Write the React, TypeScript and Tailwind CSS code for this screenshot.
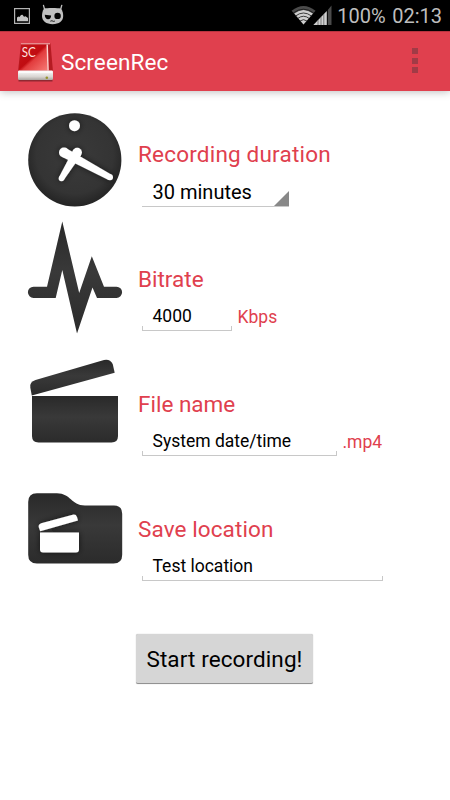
import type { ReactNode } from 'react';

function StatusBar() {
  return (
    <header className="flex h-[31px] items-start justify-between bg-black pr-[8px] pl-[14px] text-[#bebebe]">
      <div className="flex h-[31px]">
        <svg width="56" height="31" viewBox="14 0 56 31" aria-hidden="true">
          <rect x="14.6" y="8.6" width="14.8" height="14.8" fill="none" stroke="#b3b3b3" strokeWidth="1.2" />
          <path d="M17 21.300v-3.800l1.500-1 1 .4 1.500-1.900 1.500-.2 1.500 2 1.500-.6 2.500 1.800v3.300z" fill="#c4c4c4" />
          <path d="M44.600 9.500 43.500 5.300M60.600 9.500l1.200-4.200" stroke="#bcbcbc" strokeWidth="1.300" strokeLinecap="round" />
          <path d="M42 16c0-3 .6-5.500 2-7.300 2.500-.8 14-.8 17 0 1.500 2 2.200 4.300 2.200 7.300 0 5-4.200 8.200-10.600 8.200S42 21 42 16z" fill="#c1c1c1" />
          <path d="M44.800 14.700l6.300.8c0 2.400-1.100 3.700-3 3.700s-3.300-1.600-3.300-4.500z" fill="#050505" />
          <circle cx="57.600" cy="15.900" r="3.200" fill="#050505" />
          <path d="M50.300 21.200l1.700-.5 1.200.7 1.700-.3" stroke="#222" strokeWidth="1" fill="none" />
        </svg>
      </div>
      <div className="flex h-[31px] items-start">
        <svg width="42" height="31" viewBox="291 0 42 31" aria-hidden="true">
          <path d="M291.600 10.800Q303.500 1.200 315.500 10.800L303.500 24.500z" fill="#4b4b4b" />
          <path d="M294.300 13.600Q303.500 6.600 312.900 13.600L303.500 24.500z" fill="#cfcfcf" />
          <g fill="none" stroke="#141414" strokeWidth=".8">
            <path d="M293.400 12.900Q303.500 5.500 313.600 12.900" />
            <path d="M295.500 16Q303.500 10 311.500 16" />
            <path d="M297.700 18.500Q303.500 14 309.300 18.500" />
            <path d="M300 21Q303.500 18.300 307 21" />
          </g>
          <path d="M313.300 25L326.800 11V25z" fill="#cfcfcf" />
          <path d="M327.800 10L331.500 5.500V25H327.800z" fill="#4b4b4b" />
          <path d="M318 20v5M321 17v8M323.800 14v11" stroke="#555" strokeWidth=".7" />
        </svg>
        <span className="mt-[4px] ml-[4px] w-[55px] text-[20px] leading-6 tracking-[0px]">100%</span>
        <span className="mt-[4px] text-[20px] leading-6 tracking-[0px]">02:13</span>
      </div>
    </header>
  );
}

function AppIcon() {
  return (
    <svg width="44" height="60" viewBox="14 31 44 60" aria-hidden="true">
      <defs>
        <linearGradient id="drive" x1="0" y1="0" x2="1" y2="1">
          <stop stopColor="#c8161b" />
          <stop offset=".48" stopColor="#c00c11" />
          <stop offset=".56" stopColor="#e23c3d" />
          <stop offset="1" stopColor="#f77b76" />
        </linearGradient>
        <linearGradient id="base" x1="0" y1="0" x2="0" y2="1">
          <stop stopColor="#fff" />
          <stop offset=".65" stopColor="#d8d5d1" />
          <stop offset="1" stopColor="#aaa5a0" />
        </linearGradient>
      </defs>
      <path d="M18.500 79.500h34" stroke="#8f2932" strokeWidth="2" />
      <path d="M21 42.500h29.500l2.500 28H18z" fill="#b51b22" />
      <path d="M21.500 43.500h25.300l.9 26H18.900z" fill="url(#drive)" />
      <path d="M47.200 43.500l.9 26" stroke="#ffd5d1" strokeWidth="1.400" />
      <path d="M21 42.800h29" stroke="#f4b6b6" strokeWidth="1" />
      <rect x="18" y="69.500" width="35" height="9.500" rx="1.200" fill="url(#base)" />
      <path d="M19 71.200h33" stroke="#fff" />
      <circle cx="46.800" cy="76.800" r="1.300" fill="#96932a" />
      <text x="21.800" y="55.500" fill="#ffe1df" fontSize="13" textLength="14" lengthAdjust="spacingAndGlyphs" fontFamily="Lato, sans-serif">SC</text>
    </svg>
  );
}

function TitleBar() {
  return (
    <div className="z-10 flex h-[60px] items-center border-t border-[#b83440] bg-[#e0404e] pl-[14px] shadow-[0_1px_8px_rgba(0,0,0,0.26)]">
      <AppIcon />
      <h1 className="ml-[3px] text-[22.500px] leading-[30px] font-normal tracking-[0.1px] text-white">ScreenRec</h1>
      <button aria-label="More options" className="mr-[32px] mb-[2px] ml-auto flex flex-col gap-[3.500px]">
        <i className="size-[6px] bg-[#a13b46]" />
        <i className="size-[6px] bg-[#a13b46]" />
        <i className="size-[6px] bg-[#a13b46]" />
      </button>
    </div>
  );
}

function Defs() {
  return (
    <svg width="0" height="0" className="absolute" aria-hidden="true">
      <defs>
        <linearGradient id="ink" x1="0" y1="0" x2="0" y2="1">
          <stop stopColor="#292929" />
          <stop offset=".45" stopColor="#393939" />
          <stop offset="1" stopColor="#2b2b2b" />
        </linearGradient>
        <radialGradient id="disc" cx=".5" cy=".45" r=".55">
          <stop stopColor="#3a3a3a" />
          <stop offset=".75" stopColor="#343434" />
          <stop offset="1" stopColor="#242424" />
        </radialGradient>
        <filter id="soft" x="-20%" y="-20%" width="140%" height="140%">
          <feDropShadow dx="0" dy="0" stdDeviation="3" floodColor="#111" floodOpacity=".6" />
        </filter>
      </defs>
    </svg>
  );
}

function Clock() {
  return (
    <svg width="123" height="125" viewBox="15 92 123 125" aria-hidden="true">
      <circle cx="74.800" cy="159.900" r="46.600" fill="url(#disc)" />
      <g fill="#fff" filter="url(#soft)">
        <circle cx="74.500" cy="125.700" r="5.500" />
        <circle cx="64" cy="152.500" r="5" />
        <circle cx="110" cy="177.300" r="3" />
        <path d="M66.200 148.300 111.600 174.700 108.600 180 61.800 156.700z" />
        <circle cx="77.200" cy="152.500" r="4.700" />
        <circle cx="61.500" cy="178.500" r="2.800" />
        <path d="M81 155.200 63.800 180.100 59.100 177 73.400 149.800z" />
      </g>
    </svg>
  );
}

function Pulse() {
  return (
    <svg width="123" height="125" viewBox="15 217 123 125" aria-hidden="true">
      <path d="M33.500 286.700H47L62.300 221.500 79.200 293 91.800 256.200 104 286.700h12.500a5.600 5.600 0 0 1 0 11.200H97L92.500 287.500 77 333.500 62.300 270 55.700 297.900H33.500a5.600 5.600 0 0 1 0-11.200z" fill="url(#ink)" />
    </svg>
  );
}

function Clapper() {
  return (
    <svg width="123" height="125" viewBox="15 342 123 125" aria-hidden="true">
      <path d="M31.800 395.500L30.300 387.500Q29.500 381.800 35.500 380L104 360Q110 358.700 112.700 364L114.700 372.800z" fill="url(#ink)" />
      <path d="M32 396h86v40q0 6.500-6.500 6.500H38.500q-6.500 0-6.500-6.500z" fill="url(#ink)" />
    </svg>
  );
}

function Folder() {
  return (
    <svg width="123" height="125" viewBox="15 467 123 125" aria-hidden="true">
      <path d="M28.200 502q0-8.700 8.700-8.700h20c14 0 14 12.200 28 12.200h29q8.300 0 8.300 8.300v41q0 8.700-8.700 8.700H36.900q-8.700 0-8.700-8.700z" fill="url(#ink)" />
      <g fill="#fff" filter="url(#soft)">
        <path d="M40.200 531.200l-1.500-4.200q-.5-2.500 2.500-3.700l31.500-8.600q3.300-.7 4.300 2.300l1 3.600z" />
        <path d="M40 532.500h39v17q0 3-3 3H43q-3 0-3-3z" />
      </g>
    </svg>
  );
}

function Setting({ icon, label, tracking, children }: { icon: ReactNode; label: string; tracking: string; children: ReactNode }) {
  return (
    <section className="flex h-[125px] pl-[15px]">
      {icon}
      <div className="flex flex-1 flex-col pt-[47px]">
        <h2 className={`mb-px h-[30px] text-[22.500px] leading-[30px] font-normal whitespace-nowrap text-[#e0404e] ${tracking}`}>{label}</h2>
        <div className="flex pl-[4px]">{children}</div>
      </div>
    </section>
  );
}

function Field({ value, width }: { value: string; width: string }) {
  return (
    <div className={`flex h-[36px] flex-col justify-end ${width}`}>
      <span className="pl-[10.500px] text-[17.500px] leading-[20px] whitespace-nowrap text-black">{value}</span>
      <div className="h-[5px] border-x border-b border-[#c8c8c8]" />
    </div>
  );
}

function Suffix({ children }: { children: ReactNode }) {
  return <span className="mt-[12px] ml-[5.500px] text-[17.500px] leading-[20px] text-[#e0404e]">{children}</span>;
}

export default function App() {
  return (
    <div className="flex h-[800px] w-[450px] flex-col overflow-hidden bg-white font-[Roboto,sans-serif]">
      <Defs />
      <StatusBar />
      <TitleBar />
      <main className="flex flex-col pt-px">
        <Setting icon={<Clock />} label="Recording duration" tracking="tracking-[0.2px]">
          <div className="flex h-[37px] w-[147px] items-end justify-between border-b border-[#c8c8c8]">
            <span className="mb-[2px] ml-[10.500px] text-[20px] leading-[24px] whitespace-nowrap text-black">30 minutes</span>
            <i className="size-[15px] bg-[#888] [clip-path:polygon(100%_0,100%_100%,0_100%)]" />
          </div>
        </Setting>
        <Setting icon={<Pulse />} label="Bitrate" tracking="tracking-[0px]">
          <Field value="4000" width="w-[90px]" />
          <Suffix>Kbps</Suffix>
        </Setting>
        <Setting icon={<Clapper />} label="File name" tracking="tracking-[0px]">
          <Field value="System date/time" width="w-[195px]" />
          <Suffix>.mp4</Suffix>
        </Setting>
        <Setting icon={<Folder />} label="Save location" tracking="tracking-[0.1px]">
          <Field value="Test location" width="w-[241px]" />
        </Setting>
        <button className="mt-[42px] ml-[136px] h-[50px] w-[177px] rounded-[2px] border-b border-[#929292] bg-[#d6d6d6] text-[22.500px] leading-[30px] tracking-[0.1px] whitespace-nowrap text-black shadow-[0_0_1px_#aaa]">
          Start recording!
        </button>
      </main>
    </div>
  );
}
